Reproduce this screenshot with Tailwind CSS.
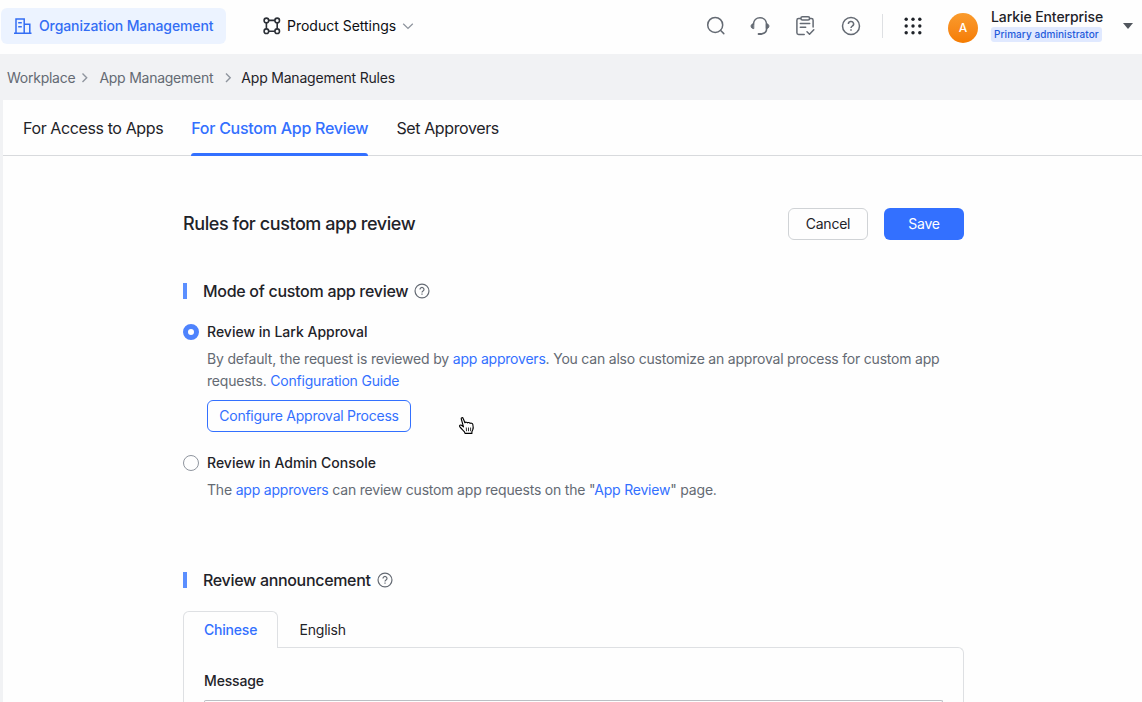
<!DOCTYPE html>
<html lang="en">
<head>
<meta charset="utf-8">
<title>App Management Rules</title>
<script src="https://cdn.jsdelivr.net/npm/@tailwindcss/browser@4"></script>
</head>
<body class="h-[702px] w-[1142px] overflow-hidden bg-[#f1f2f4] font-['Inter',sans-serif] text-sm text-[#1f2329]">
<header class="flex h-[54px] items-start bg-[#fefefe]">
  <a class="mt-2 ml-px flex h-9 w-[225px] items-center rounded-md bg-[#ecf3ff] pl-3 font-medium text-[#336df4]">
    <svg class="mr-1.5 size-5" viewBox="0 0 20 20" fill="none" stroke="currentColor" stroke-width="1.5"><path d="M1 17.3h17.5M3 17V2.9h8.2V17M11.2 8.2h5.6V17M5.2 6.7h3.6M5.2 10.7h3.6"/></svg>
    <span class="tracking-[-0.11px]">Organization Management</span>
  </a>
  <a class="mt-2 ml-9 flex h-9 items-center text-[#0c0e12]">
    <svg class="mr-[5px] size-5" viewBox="0 0 20 20" fill="none" stroke="#2b2f36" stroke-width="1.6"><circle cx="4.4" cy="4.4" r="2.3"/><circle cx="15.2" cy="4.4" r="2.3"/><circle cx="4.4" cy="15.2" r="2.3"/><circle cx="15.2" cy="15.2" r="2.3"/><path d="M6.6 4.4H13M6.6 15.2H13M4.4 6.6V13M15.2 6.6V13"/></svg>
    <span class="w-[109px] tracking-[-0.01px] whitespace-nowrap">Product Settings</span>
    <svg class="ml-1.5 h-3 w-3" viewBox="0 0 12 12" fill="none" stroke="#8f959e" stroke-width="1.3"><path d="M1.200 3.800 6 8.400l4.800-4.600"/></svg>
  </a>
  <div class="mr-[9px] ml-auto flex h-[54px] items-start text-[#646a73]">
    <svg class="mt-4 mr-6 size-5" viewBox="0 0 20 20" fill="none" stroke="currentColor" stroke-width="1.5" stroke-linecap="round"><circle cx="9.2" cy="8.9" r="7.5"/><path d="m14.7 14.5 3.1 3.1"/></svg>
    <svg class="mt-4 mr-[25px] size-5" viewBox="0 0 20 20" fill="none" stroke="currentColor" stroke-width="1.6" stroke-linecap="round" stroke-linejoin="round"><path d="M3.400 8.200C3.600 4.300 6.300 1.700 10 1.700s6.400 2.600 6.600 6.500v4.600c0 2.500-1.600 4.300-4.100 4.800"/><path d="M8.600 17.900h2.800" stroke-width="2"/><path d="M3.400 7.800c-1.600.2-2.300 1.100-2.300 2.400s.7 2.200 2.300 2.400zM16.600 7.800c1.600.2 2.300 1.100 2.300 2.400s-.7 2.200-2.300 2.400z" fill="currentColor" stroke-width="1"/></svg>
    <svg class="mt-4 mr-[26px] size-5" viewBox="0 0 20 20" fill="none" stroke="currentColor" stroke-width="1.5" stroke-linecap="round" stroke-linejoin="round"><path d="M5.500 2.500H3.600a1.700 1.700 0 0 0-1.700 1.700v12.600a1.700 1.700 0 0 0 1.700 1.700h5.600M14.500 2.500h1.900a1.700 1.700 0 0 1 1.700 1.700V11M5.300 7.500h9.400M5.300 11.300h5.400M12 15.800l2.500 2.400 4.300-4.500"/><rect x="5.900" y=".8" width="8.700" height="3.300" rx="1.500"/></svg>
    <svg class="mt-4 mr-[21px] size-5" viewBox="0 0 20 20" fill="none" stroke="currentColor" stroke-width="1.500"><circle cx="10" cy="10" r="8.500"/><path d="M7.400 8a2.600 2.400 0 1 1 3.900 2c-.9.6-1.300 1-1.300 2"/><path d="M10 13.200v1.500"/></svg>
    <i class="mt-3.5 mr-5 h-6 w-px bg-[#dee0e3]"></i>
    <svg class="mt-4 mr-[25px] size-5" viewBox="0 0 20 20" fill="#1f2329"><circle cx="3.200" cy="3.200" r="1.700"/><circle cx="10" cy="3.200" r="1.700"/><circle cx="16.800" cy="3.200" r="1.700"/><circle cx="3.200" cy="10" r="1.700"/><circle cx="10" cy="10" r="1.700"/><circle cx="16.800" cy="10" r="1.700"/><circle cx="3.200" cy="16.800" r="1.700"/><circle cx="10" cy="16.800" r="1.700"/><circle cx="16.800" cy="16.800" r="1.700"/></svg>
    <span class="mt-[13px] mr-[13px] flex size-[30px] items-center justify-center rounded-full bg-linear-to-b from-[#fa9b2c] to-[#f57c00] text-xs font-medium text-white">A</span>
    <div class="mt-[7px] w-[132px]">
      <div class="h-5 leading-5 font-medium tracking-[-0.09px] text-[#1f2329]">Larkie Enterprise</div>
      <div class="flex h-[15px] w-[111px] items-center rounded-[3px] bg-[#e0e9ff] pl-[3px] text-[10px] font-medium tracking-[0.07px] whitespace-nowrap text-[#245bdb]">Primary administrator</div>
    </div>
    <svg class="mt-[23px] h-1.5 w-2.5" viewBox="0 0 10 6" fill="#51565d"><path d="M0 0h10L5 6z"/></svg>
  </div>
</header>
<nav class="flex h-[46px] items-center pt-0.5 pl-[7px] tracking-[-0.25px] text-[#646a73]">
  <span>Workplace</span>
  <svg class="mr-[5px] ml-[3px] size-4" viewBox="0 0 16 16" fill="none" stroke="#8f959e" stroke-width="1.400"><path d="m4.500 3.600 4.200 4.200-4.200 4.200"/></svg>
  <span>App Management</span>
  <svg class="mr-[3px] ml-[9px] size-4" viewBox="0 0 16 16" fill="none" stroke="#8f959e" stroke-width="1.400"><path d="m4 3.600 4.200 4.200L4 12"/></svg>
  <span class="tracking-[-0.2px] text-[#1f2329]">App Management Rules</span>
</nav>
<main class="ml-[3px] h-[602px] bg-[#fefefe]">
  <div class="flex h-14 gap-7 border-b border-[#d8dadd] pl-5 text-base leading-[57px]">
    <span class="tracking-[-0.39px]">For Access to Apps</span>
    <span class="relative font-medium tracking-[-0.26px] text-[#3370ff]">For Custom App Review<i class="absolute right-0 bottom-[-1px] left-0 h-[3px] rounded-t-[3px] bg-[#3370ff]"></i></span>
    <span class="tracking-[-0.38px]">Set Approvers</span>
  </div>
  <div class="ml-[180px] w-[781px] pt-[52px]">
    <div class="flex h-8 items-center">
      <h1 class="mr-auto text-lg font-medium tracking-[-0.43px]">Rules for custom app review</h1>
      <button class="mr-4 h-8 w-20 rounded-md border border-[#d0d3d6] tracking-[-0.25px]">Cancel</button>
      <button class="h-8 w-20 rounded-md bg-[#3370ff] tracking-[-0.25px] text-white">Save</button>
    </div>
    <h2 class="mt-[39px] flex h-6 items-center text-base font-medium tracking-[-0.29px]">
      <i class="mr-4 h-4 w-1 bg-[#5b8fff]"></i>Mode of custom app review
      <svg class="ml-1.5 size-4" viewBox="0 0 20 20" fill="none" stroke="#646a73" stroke-width="1.500"><circle cx="10" cy="10" r="8.700"/><path d="M7.500 8a2.500 2.400 0 1 1 3.800 2c-.9.6-1.300 1-1.300 2"/><path d="M10 13.200v1.500"/></svg>
    </h2>
    <div class="mt-[18px] flex h-[22px] items-center font-medium"><i class="mr-2 size-4 rounded-full border-[5px] border-[#4e83fd] bg-white"></i>Review in Lark Approval</div>
    <p class="mt-[5px] ml-6 leading-[22px] tracking-[-0.21px] whitespace-nowrap text-[#646a73]"><span class="tracking-[-0.18px]">By default, the request is reviewed by </span><a class="text-[#3370ff]">app approvers</a>. You can also customize an approval process for custom app<br>requests. <a class="text-[#3370ff]">Configuration Guide</a></p>
    <button class="mt-2 ml-6 block h-8 w-[204px] rounded-md border border-[#3370ff] tracking-[-0.24px] text-[#3370ff]">Configure Approval Process</button>
    <div class="mt-5 flex h-[22px] items-center font-medium"><i class="mr-2 size-4 rounded-full border border-[#8f959e]"></i>Review in Admin Console</div>
    <p class="mt-[5px] ml-6 leading-[22px] tracking-[-0.2px] whitespace-nowrap text-[#646a73]">The <a class="text-[#3370ff]">app approvers</a> can review custom app requests on the "<a class="text-[#3370ff]">App Review</a>" page.</p>
    <h2 class="mt-[67px] flex h-6 items-center text-base font-medium tracking-[-0.32px]">
      <i class="mr-4 h-4 w-1 bg-[#5b8fff]"></i>Review announcement
      <svg class="ml-1.5 size-4" viewBox="0 0 20 20" fill="none" stroke="#646a73" stroke-width="1.500"><circle cx="10" cy="10" r="8.700"/><path d="M7.500 8a2.500 2.400 0 1 1 3.800 2c-.9.6-1.300 1-1.300 2"/><path d="M10 13.200v1.500"/></svg>
    </h2>
    <div class="relative z-10 mt-[19px] flex h-[37px] leading-[36px] tracking-[-0.2px]">
      <span class="h-[37px] w-[95px] rounded-t-md border border-b-0 border-[#dee0e3] bg-[#fefefe] pl-5 font-medium text-[#3370ff]">Chinese</span>
      <span class="ml-[21.500px] pt-px">English</span>
    </div>
    <section class="-mt-px h-[55px] rounded-tr-md border border-b-0 border-[#dee0e3] px-5 pt-[22px]">
      <label class="block h-[22px] leading-[22px] font-medium tracking-[-0.15px]">Message</label>
      <div class="mt-2 h-0.5 rounded-t-[4px] border border-b-0 border-[#bbbfc4]"></div>
    </section>
  </div>
</main>
<svg class="absolute top-[416px] left-[458px] h-5 w-[18px]" viewBox="0 0 18 20" fill="#fff" stroke="#000" stroke-width="1.100" stroke-linejoin="round"><path d="M5.500 10.800 3.300 3c-.4-1.500 1.400-1.900 1.900-.5l1.700 4.300c.4-.9 2.200-.8 2.600.1.600-.7 2.200-.4 2.500.5.800-.6 2.500-.1 2.800 1 .5 1.900.8 3.700-.1 5.500l-.8 1.900v1.600H7l-.5-1.600c-1.300-1.600-3.300-3.100-4.800-5.200-.7-1.200.7-2.100 1.800-1.300z"/><path d="M8.300 11.500l.2 3.700M10.500 11.500v3.700M12.600 11.500v3.700" stroke-width=".8"/></svg>
</body>
</html>
